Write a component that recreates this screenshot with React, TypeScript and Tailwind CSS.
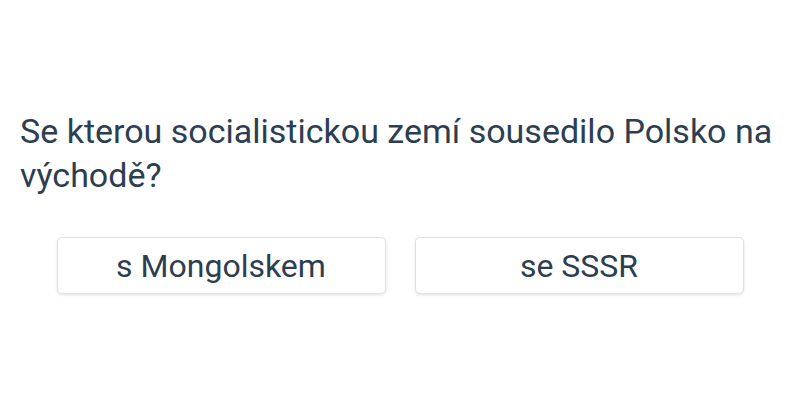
export default function App() {
  const options = ['s Mongolskem', 'se SSSR'];

  return (
    <div
      className="w-[800px] h-[400px] bg-white text-[#2c3e50] pt-[109px] px-5"
      style={{ fontFamily: 'Roboto, "Noto Sans", sans-serif' }}
    >
      <p className="text-[34px] leading-[44px]">
        Se kterou socialistickou zemí sousedilo Polsko na východě?
      </p>
      <div className="mt-[40px] flex justify-center gap-[29px]">
        {options.map((option) => (
          <button
            key={option}
            className="w-[329px] h-[57px] rounded-[5px] border border-[#e2e2e2] bg-white shadow-[0_1px_3px_rgba(0,0,0,0.12)] text-[32px] leading-none text-[#2c3e50]"
          >
            {option}
          </button>
        ))}
      </div>
    </div>
  );
}
